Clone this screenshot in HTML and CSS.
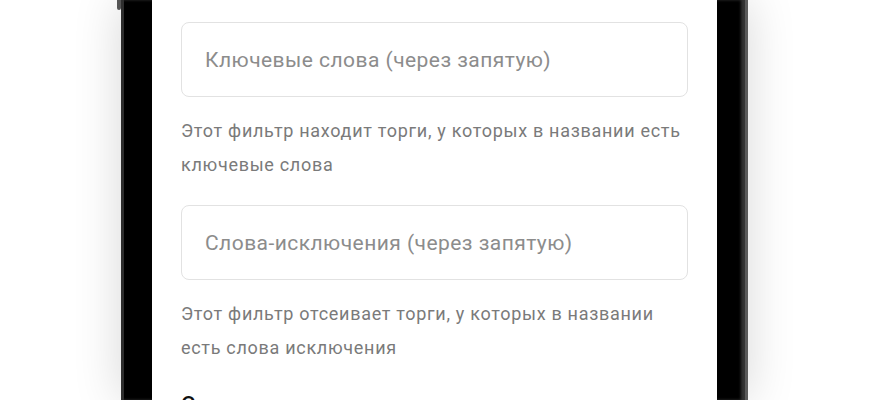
FILE: index.html
```html
<!DOCTYPE html>
<html lang="ru">
<head>
  <meta charset="UTF-8">
  <title>Фильтры торгов</title>
  <link rel="stylesheet" href="styles.css">
</head>
<body>

<div class="phone">
  <div class="side-button"></div>
  <div class="screen">

    <div class="field">Ключевые слова (через запятую)</div>
    <p class="hint">Этот фильтр находит торги, у которых в названии есть ключевые слова</p>

    <div class="field">Слова-исключения (через запятую)</div>
    <p class="hint">Этот фильтр отсеивает торги, у которых в названии есть слова исключения</p>

    <h3 class="section-title">Сумма контракта</h3>

  </div>
</div>

</body>
</html>
```
FILE: styles.css
```css
    html, body {
      margin: 0;
      height: 100%;
      overflow: hidden;
      background: #fff;
    }

    body {
      font-family: Roboto, "Noto Sans", sans-serif;
    }

    .phone {
      position: relative;
      width: 565px;
      height: 100%;
      margin-left: 121px;
      background: #000;
      border-left: 3px solid #2e2e2e;
      border-right: 3px solid #5a5a5a;
      padding: 0 28px;
      box-shadow: 0 0 45px rgba(0,0,0,0.16), inset -4px 0 3px #333;
    }

    .side-button {
      position: absolute;
      left: -7px;
      top: -10px;
      width: 4px;
      height: 20px;
      background: #555;
      border-radius: 2px;
    }

    .screen {
      background: #fff;
      height: 100%;
      padding: 22px 29px 0;
      box-sizing: border-box;
    }

    .field {
      height: 75px;
      box-sizing: border-box;
      border: 1px solid #e2e2e2;
      border-radius: 8px;
      padding: 0 23px;
      display: flex;
      align-items: center;
      font-size: 21px;
      letter-spacing: 0.45px;
      color: #8c8c8c;
    }

    .hint {
      margin: 17px 0 23px;
      font-size: 18px;
      letter-spacing: 0.7px;
      line-height: 34px;
      color: #7a7a7a;
    }

    .section-title {
      margin: 0;
      padding-top: 4px;
      font-size: 22px;
      font-weight: 500;
      color: #111;
    }
```
